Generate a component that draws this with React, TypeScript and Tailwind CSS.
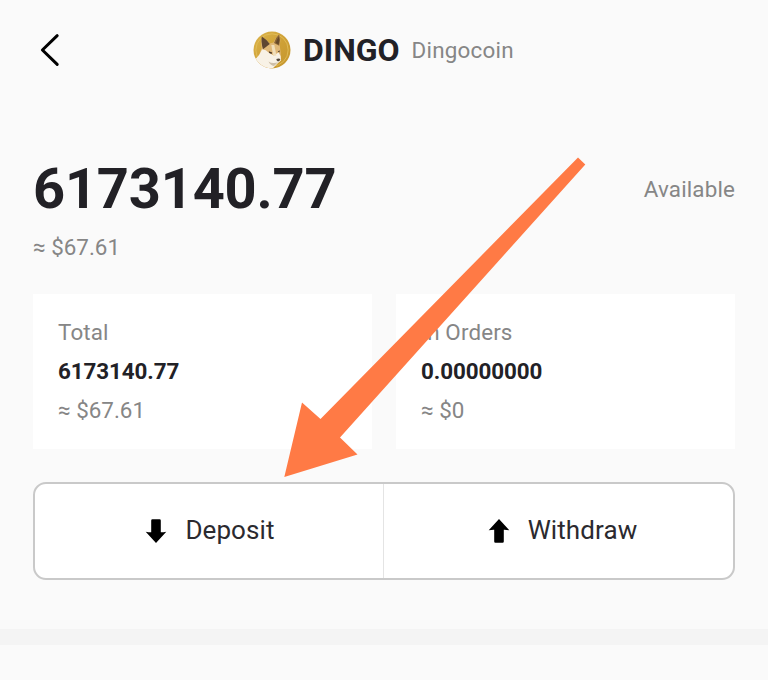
import type { ReactNode } from "react";

function DingoLogo() {
  return (
    <svg className="h-[38px] w-[38px] shrink-0" viewBox="0 0 38 38" aria-hidden="true">
      <defs>
        <linearGradient id="coin" x1="0" y1="0" x2="1" y2="1">
          <stop offset="0" stopColor="#dcb54c" />
          <stop offset="0.5" stopColor="#cfa136" />
          <stop offset="1" stopColor="#c4952d" />
        </linearGradient>
        <clipPath id="coinClip">
          <circle cx="19" cy="19" r="18.5" />
        </clipPath>
      </defs>
      <circle cx="19" cy="19" r="18.5" fill="url(#coin)" />
      <circle cx="19" cy="19" r="16.2" fill="none" stroke="#e3c05c" strokeWidth="0.8" />
      <g clipPath="url(#coinClip)">
        <path d="M8.8 5.5 Q13.5 8.5 16.8 12.5 L20.5 11.5 Q22.5 6.5 26.2 3.2 Q28.2 9 26.8 15 L27.6 21 L28 29 L24.5 32 L19 38 L8 36 L3.5 28 Q7 23 8.5 17.5 Q7.5 11 8.8 5.5 Z" fill="#e0b878" />
        <path d="M8.8 5.5 Q13.8 8.5 16.8 13 L10 18.3 Q7.8 11 8.8 5.5 Z" fill="#5f4630" />
        <path d="M26.2 3.2 Q22.3 6.7 21 12 L26.2 14.8 Q27.9 9 26.2 3.2 Z" fill="#8c6634" />
        <path d="M26 5.5 Q23.4 9 22.8 12 L25.6 13.4 Q26.8 9 26 5.5 Z" fill="#64482a" />
        <path d="M9 18.5 Q12.5 18 15.5 21.5 L20.5 24.5 L25.5 21.5 L27.6 25 L27.9 29.5 L24.5 32.5 L19 38 L8 36 L2.5 28 Q7 24 9 18.5 Z" fill="#f8f2e6" />
        <path d="M18.3 14 L21.3 14 L23.4 24.5 L20.3 25 Z" fill="#f1dfbb" />
        <path d="M15.8 20.2 L19.2 21.6 L18.6 22.9 L16.2 22 Z M24.7 20.3 L26.9 19.4 L26.3 21.5 Z" fill="#4a3828" />
        <path d="M23.3 28 Q25.8 26.8 27.4 28 Q27 30.3 25 30.5 Q23.4 29.8 23.3 28 Z" fill="#554a3e" />
        <path d="M15.5 30.5 Q19.5 33.2 25 31.3 L21 35 Q17.2 34.2 15.5 30.5 Z" fill="#cdbfa8" />
      </g>
    </svg>
  );
}

function ArrowIcon({ up = false }: { up?: boolean }) {
  return (
    <svg className={up ? "h-6 w-[22px]" : "h-6 w-[22px] rotate-180"} viewBox="0 0 22 24" aria-hidden="true">
      <path d="M11 0 L21.3 11.3 Q18 10.6 15.8 10.7 V22.6 Q15.8 23.8 14.6 23.8 H7.4 Q6.2 23.8 6.2 22.6 V10.7 Q4 10.6 .7 11.3 Z" fill="#000" />
    </svg>
  );
}

function BalanceCard({ label, amount, value }: { label: string; amount: string; value: string }) {
  return (
    <section className="h-[155px] bg-white px-[25px] pt-[19px] text-[22.4px] leading-[39px] text-[#868686]">
      <p className="tracking-[0.12px]">{label}</p>
      <p className="font-bold tracking-[-0.08px] text-[#222126]">{amount}</p>
      <p>{value}</p>
    </section>
  );
}

function ActionButton({ icon, children }: { icon: ReactNode; children: ReactNode }) {
  return (
    <button className="flex flex-1 items-center justify-center gap-[18px] pb-px pl-[2px] text-[26px] tracking-[0.1px] text-[#2b2a2f]">
      {icon}
      <span>{children}</span>
    </button>
  );
}

export default function App() {
  return (
    <main className="relative h-[680px] w-[768px] overflow-hidden bg-[#fafafa] font-['Roboto',sans-serif]">
      <header className="grid h-[100px] grid-cols-[253px_1fr] items-center">
        <button className="pl-[38px]" aria-label="Back">
          <svg className="h-9 w-6" viewBox="0 0 24 36" fill="none" stroke="#000" strokeWidth="3" strokeLinecap="round" strokeLinejoin="round">
            <path d="M19.2 3.7 L4.4 18 L19.2 32.4" />
          </svg>
        </button>
        <div className="flex items-center">
          <DingoLogo />
          <h1 className="ml-3 text-[32px] leading-10 font-bold text-[#222126]">DINGO</h1>
          <span className="ml-3 pb-px text-[22.4px] leading-10 tracking-[0.22px] text-[#868686]">Dingocoin</span>
        </div>
      </header>

      <div className="px-[33px] pt-[60px]">
        <div className="flex h-[60px] items-center justify-between">
          <strong className="pb-[2px] text-[56px] leading-[60px] font-bold tracking-[-0.2px] text-[#222126]">6173140.77</strong>
          <span className="text-[22.4px] tracking-[0.15px] text-[#868686]">Available</span>
        </div>
        <p className="mt-[7px] text-[22.4px] leading-10 text-[#868686]">≈ $67.61</p>

        <div className="mt-[27px] grid grid-cols-2 gap-6">
          <BalanceCard label="Total" amount="6173140.77" value="≈ $67.61" />
          <BalanceCard label="In Orders" amount="0.00000000" value="≈ $0" />
        </div>

        <div className="mt-[33px] grid h-[98px] grid-cols-[348px_1fr] rounded-[13px] border-2 border-[#c9c9c9] bg-white">
          <ActionButton icon={<ArrowIcon />}>Deposit</ActionButton>
          <div className="flex border-l border-[#e4e4e4] pl-[6px]">
            <ActionButton icon={<ArrowIcon up />}>Withdraw</ActionButton>
          </div>
        </div>
      </div>
      <div className="mt-[49px] h-4 bg-[#f4f4f4]" />

      <svg className="pointer-events-none absolute inset-0 h-full w-full" viewBox="0 0 768 680" aria-hidden="true">
        <path d="M578 157.5 L585.3 164.5 L340 437.5 L357.5 454.5 L284.3 477 L302 402.5 L320.5 419 Z" fill="#ff7a45" />
      </svg>
    </main>
  );
}
